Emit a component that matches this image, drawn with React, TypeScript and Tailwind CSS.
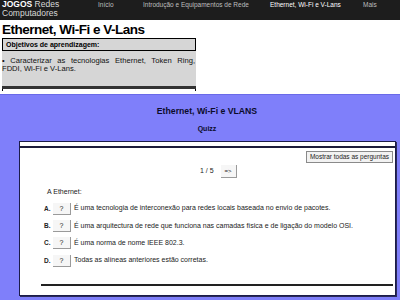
import React from 'react';

const options = [
    { letter: 'A.', text: 'É uma tecnologia de interconexão para redes locais baseada no envio de pacotes.' },
    { letter: 'B.', text: 'É uma arquitectura de rede que funciona nas camadas física e de ligação do modelo OSI.' },
    { letter: 'C.', text: 'É uma norma de nome IEEE 802.3.' },
    { letter: 'D.', text: 'Todas as alíneas anteriores estão corretas.' },
];

const App: React.FC = () => {
    return (
        <div className="w-[400px] h-[300px] overflow-hidden bg-white text-black font-['Liberation_Sans',Arial,sans-serif]">
            {/* top bar */}
            <div className="h-[20px] bg-[#1d1d1d] flex overflow-hidden">
                <div className="w-[98px] pl-[2px] text-[8.5px] leading-[9px] text-[#d8d8d8]">
                    <div><span className="font-bold text-white">JOGOS</span> Redes</div>
                    <div>Computadores</div>
                </div>
                <div className="flex pt-[1px] text-[6.5px] leading-[8px] text-[#bdbdbd] whitespace-nowrap">
                    <span className="w-[45px]">Início</span>
                    <span className="w-[127px]">Introdução e Equipamentos de Rede</span>
                    <span className="w-[93px] text-white">Ethernet, Wi-Fi e V-Lans</span>
                    <span>Mais</span>
                </div>
            </div>

            {/* page title */}
            <h1 className="pl-[2px] pt-[1px] h-[18px] text-[13.5px] leading-[17px] font-bold tracking-[-0.5px]">
                Ethernet, Wi-Fi e V-Lans
            </h1>

            {/* objectives */}
            <div className="h-[56px]">
                <div className="ml-[2px] w-[194px] bg-[#d6d6d6]">
                    <div className="h-[13px] border border-black px-[3px] text-[7px] leading-[11px] font-bold">
                        Objetivos de aprendizagem:
                    </div>
                    <div className="h-[35px] pt-[6px] pr-[1px] text-[7.6px] leading-[8px] text-justify text-[#111]">
                        • Caracterizar as tecnologias Ethernet, Token Ring, FDDI, Wi-Fi e V-Lans.
                    </div>
                    <div className="h-[3px] bg-[#333]" />
                </div>
                <div className="ml-[2px] w-[194px] h-[2px] border-x border-black" />
            </div>

            {/* quiz area */}
            <div className="h-[206px] bg-[#7f7ffa] border-t border-[#6a6ae8] pt-[11px]">
                <div className="text-center pl-[14px] text-[8.7px] leading-[10px] font-bold text-[#0b0b2a]">
                    Ethernet, Wi-Fi e VLANS
                </div>
                <div className="text-center pl-[14px] mt-[8px] text-[7px] leading-[9px] font-bold text-[#0b0b2a]">
                    Quizz
                </div>

                <div className="ml-[19px] mt-[8px] w-[377px] h-[155px] bg-white border border-[#1c1c4a] shadow-[1px_1px_0_#2a2a5a]">
                    <div className="h-[6px] border-b-2 border-[#1c1c3a]" />
                    <div className="flex justify-end pr-[2px] mt-[3px]">
                        <div className="h-[12px] px-[3px] border border-[#8a8a8a] bg-[#f2f2f2] text-[6.5px] leading-[10px] text-[#222]">
                            Mostrar todas as perguntas
                        </div>
                    </div>
                    <div className="flex items-center h-[14px] mt-[1px] pl-[180px] text-[7px] text-[#222]">
                        <span>1 / 5</span>
                        <span className="ml-[7px] w-[16px] h-[13px] border-r border-b border-[#9a9a9a] bg-[#f6f6f6] text-[6px] leading-[12px] text-center">=&gt;</span>
                    </div>
                    <div className="mt-[9px] pl-[27px] h-[10px] text-[7px] leading-[10px] text-[#222]">A Ethernet:</div>
                    <div className="mt-[3px]">
                        {options.map((opt) => (
                            <div key={opt.letter} className="flex items-center h-[17.3px] pl-[24px] text-[7px] text-[#222] whitespace-nowrap">
                                <span className="w-[9px] font-bold text-[6.5px]">{opt.letter}</span>
                                <span className="w-[18px] h-[12px] border-r border-b border-[#9a9a9a] bg-[#f6f6f6] text-center leading-[11px]">?</span>
                                <span className="ml-[3px]">{opt.text}</span>
                            </div>
                        ))}
                    </div>
                    <div className="ml-[21px] mr-[2px] mt-[15px] h-[2px] bg-[#222]" />
                </div>
            </div>
        </div>
    );
};

export default App;
